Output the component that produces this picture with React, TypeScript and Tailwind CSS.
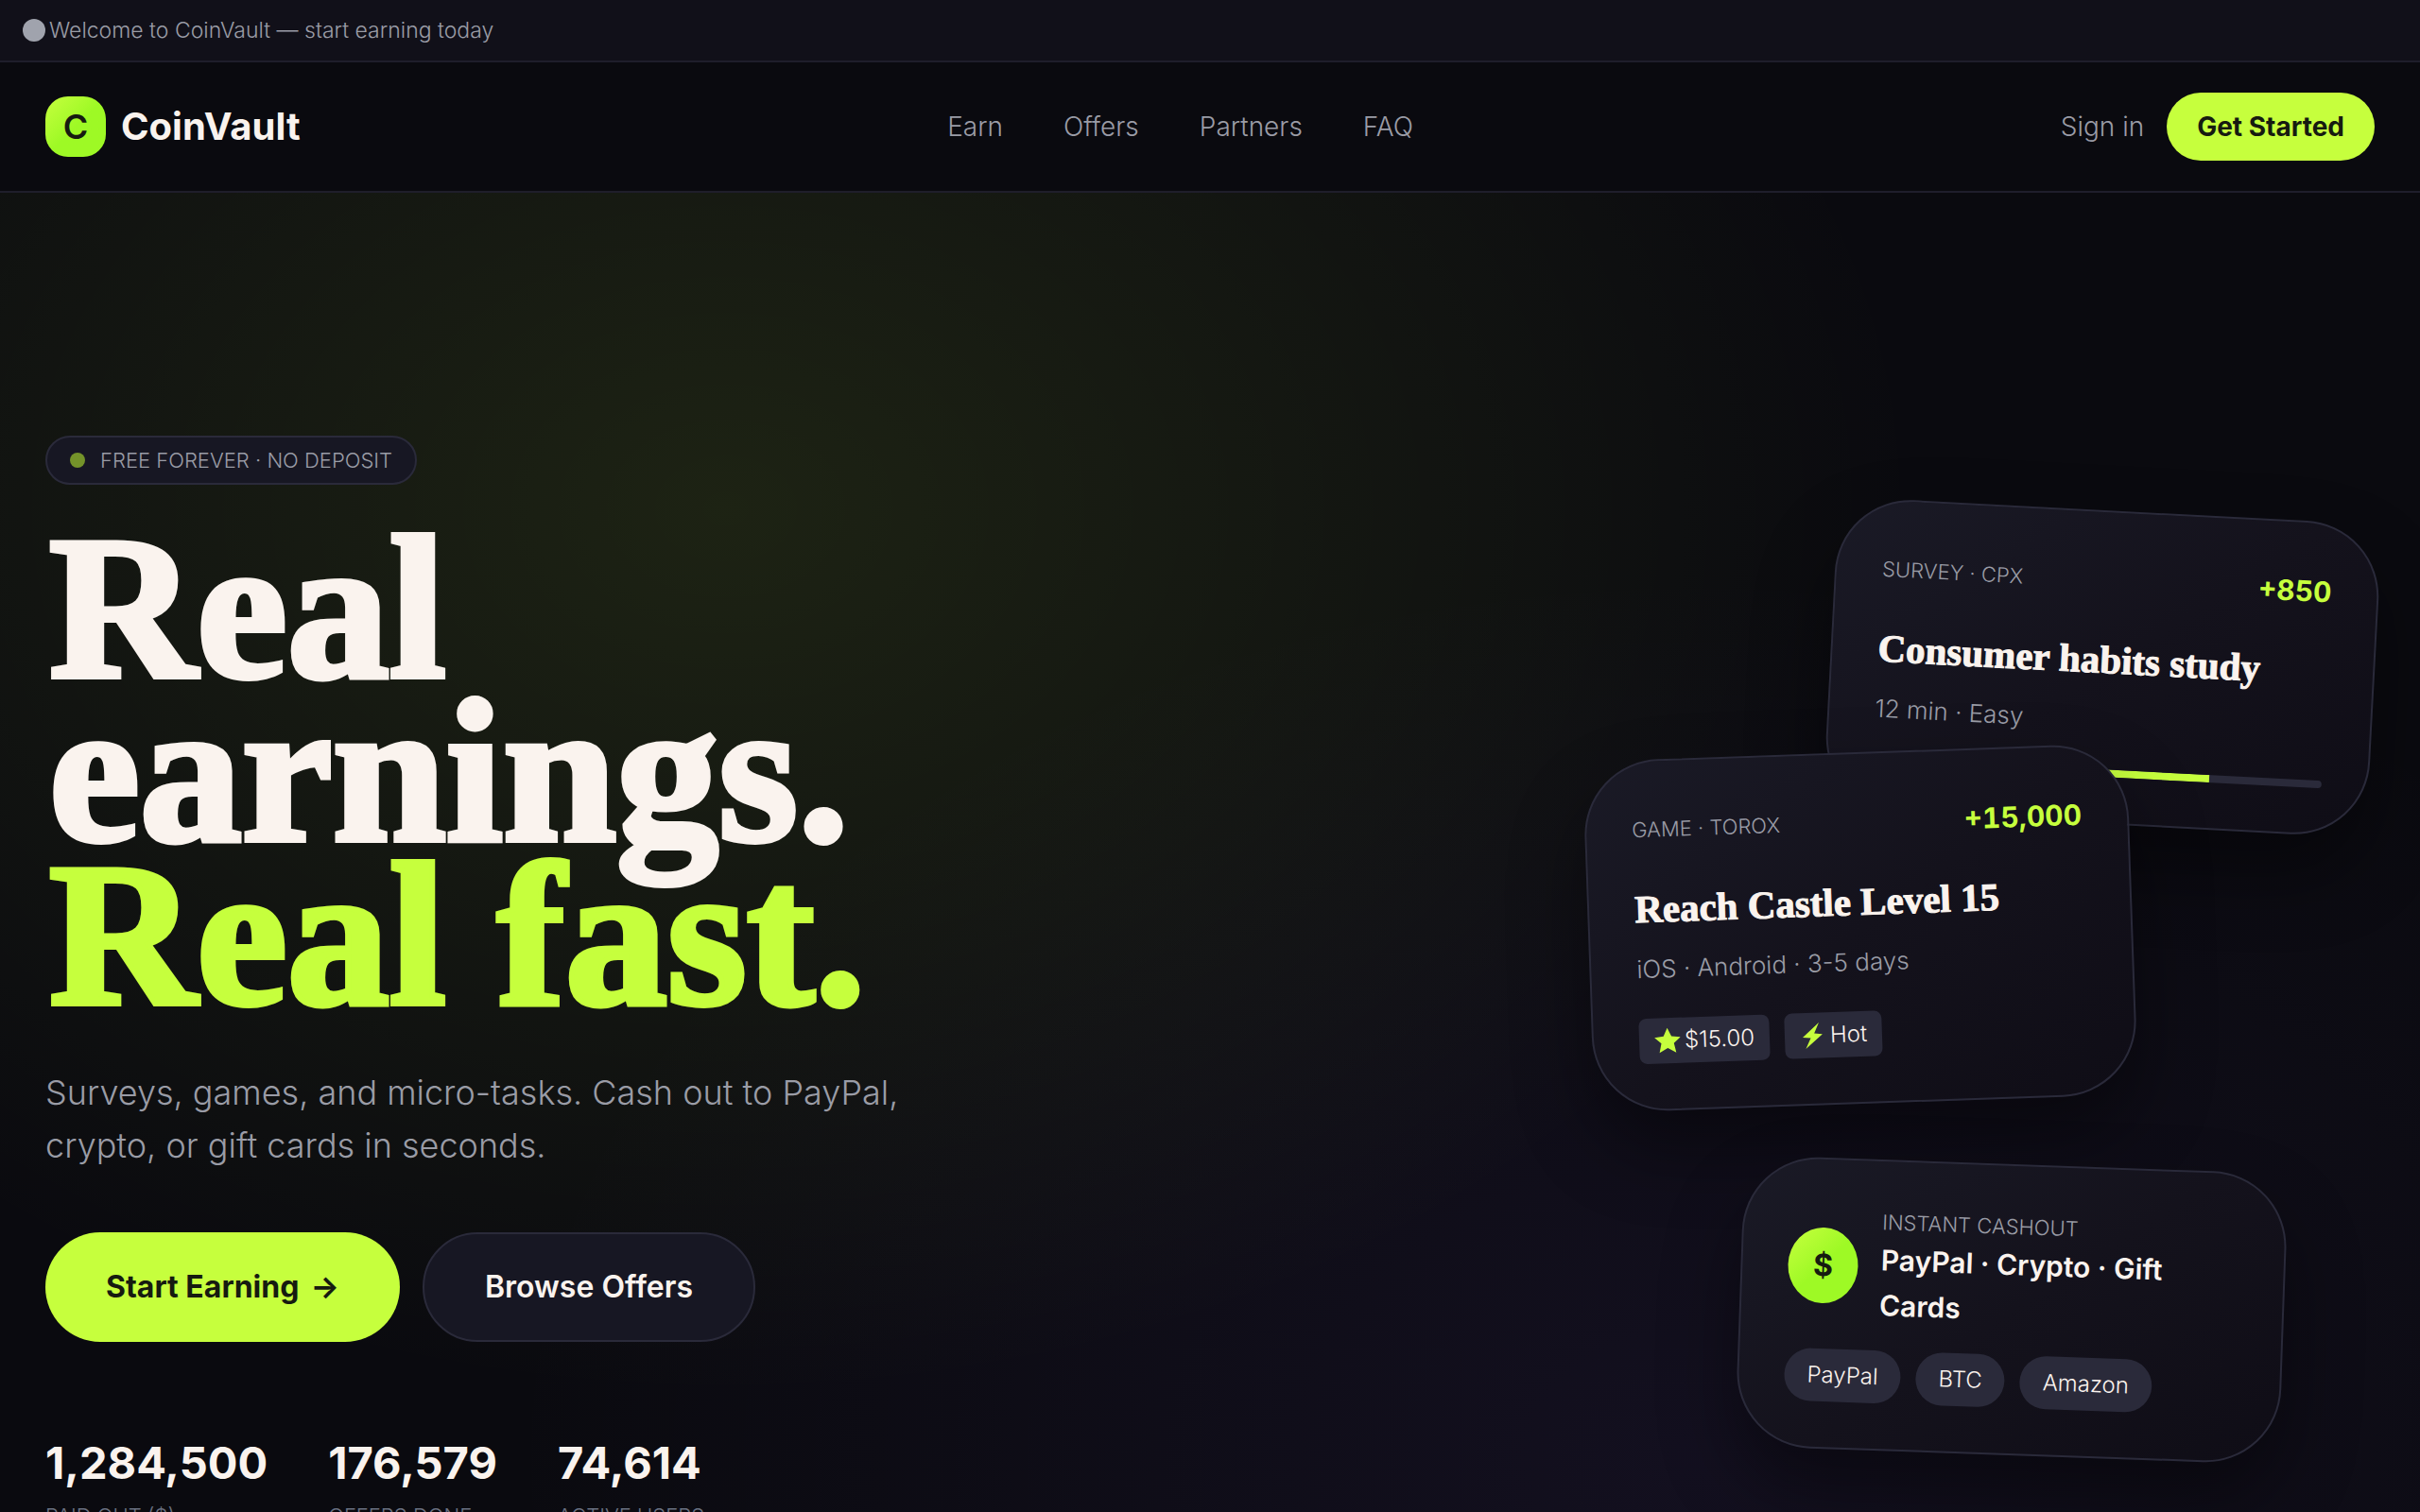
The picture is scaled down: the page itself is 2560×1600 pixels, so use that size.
import type { ReactNode } from "react";

const navLinks = ["Earn", "Offers", "Partners", "FAQ"];

const stats = [
  { value: "1,284,500", label: "PAID OUT ($)" },
  { value: "176,579", label: "OFFERS DONE" },
  { value: "74,614", label: "ACTIVE USERS" },
];

const payoutMethods = ["PayPal", "BTC", "Amazon"];

function StarIcon() {
  return (
    <svg viewBox="0 0 24 24" className="size-7 fill-[#c6ff3d]" aria-hidden="true">
      <path d="M12 .5l3.600 7.600 8.200.9-6.100 5.500 1.900 8.500L12 18.800l-7.600 4.200 1.900-8.500L.2 9l8.200-.9z" />
    </svg>
  );
}

function BoltIcon() {
  return (
    <svg viewBox="0 0 28 28" className="size-7 fill-[#c6ff3d]" aria-hidden="true">
      <path d="M20.500.5L3 15.800l8.500.9L6 28l18-15.300-8.700-.9z" />
    </svg>
  );
}

function Card({ className, children }: { className: string; children: ReactNode }) {
  return (
    <article
      className={
        "absolute w-[576px] rounded-[80px] border-2 border-[#2a2a3a] bg-linear-145 from-[#1a1a26] via-[#14121c] to-[#0f0d16] p-12 shadow-[0_40px_80px_rgba(0,0,0,0.4)] " +
        className
      }
    >
      {children}
    </article>
  );
}

function OfferHead({ source, reward, title, meta }: { source: string; reward: string; title: string; meta: string }) {
  return (
    <>
      <div className="flex h-12 items-center justify-between">
        <span className="text-[22px] leading-8 font-light text-[#9a9ca6]">{source}</span>
        <span className="text-[30px] font-bold text-[#c6ff3d] tabular-nums">{reward}</span>
      </div>
      <h2 className="mt-8 font-['Liberation_Serif',serif] text-[41px] leading-14 font-bold whitespace-nowrap [-webkit-text-stroke:1px_currentColor]">
        {title}
      </h2>
      <p className="mt-4 text-[26px] leading-10 font-light text-[#9a9ca6]">{meta}</p>
    </>
  );
}

function Tag({ children }: { children: ReactNode }) {
  return (
    <span className="flex items-center gap-1 rounded-lg bg-[#2a2a3a] px-4 py-2 text-2xl font-light">{children}</span>
  );
}

export default function App() {
  return (
    <div className="min-h-screen overflow-hidden bg-[#0a0a0f] font-['Inter',sans-serif] text-[#faf3ee]">
      <div className="flex items-center gap-1 border-b-2 border-[#1f1e2b] bg-[#111019] px-6 py-4 text-[23px] leading-8 font-light text-[#9a9ca6]">
        <span className="size-6 rounded-full bg-[#a0a3ad]" />
        <p>Welcome to CoinVault — start earning today</p>
      </div>

      <header className="flex items-center justify-between border-b-2 border-[#1f1e2b] px-12 py-8">
        <a href="#home" className="flex items-center gap-4">
          <span className="flex size-16 items-center justify-center rounded-[24px] bg-linear-135 from-[#c6ff3d] to-[#9ef925] to-50% text-4xl font-semibold text-[#161b10]">
            C
          </span>
          <span className="text-[40px] leading-14 font-bold">CoinVault</span>
        </a>
        <nav className="flex gap-16 text-[28px] leading-10 font-light text-[#9a9ca6]">
          {navLinks.map((label) => (
            <a key={label} href={"#" + label.toLowerCase()}>
              {label}
            </a>
          ))}
        </nav>
        <div className="flex items-center gap-6 text-[28px] leading-10">
          <a href="#signin" className="font-light text-[#9a9ca6]">
            Sign in
          </a>
          <button type="button" className="rounded-full bg-[#c6ff3d] px-8 py-4 font-bold text-[#161b10]">
            Get Started
          </button>
        </div>
      </header>

      <main className="flex min-h-[1672px] items-center justify-between bg-[radial-gradient(ellipse_at_30%_20%,rgba(198,255,61,0.1),transparent_50%),radial-gradient(ellipse_at_70%_80%,rgba(139,92,246,0.07),transparent_50%)] px-12">
        <section className="w-[960px]">
          <p className="flex w-fit items-center gap-4 rounded-full border-2 border-[#2a2a3a] bg-[#171723] px-6 py-2 text-[22px] leading-8 font-light text-[#9a9ca6]">
            <span className="size-4 rounded-full bg-[#74932a]" />
            FREE FOREVER · NO DEPOSIT
          </p>
          <h1 className="mt-11 pl-1 font-['Liberation_Serif',serif] text-[216px] leading-[173px] font-bold [-webkit-text-stroke:6px_currentColor]">
            <span className="block">Real</span>
            <span className="block">earnings.</span>
            <span className="block whitespace-nowrap text-[#c6ff3d]">Real fast.</span>
          </h1>
          <p className="mt-13 text-4xl leading-14 font-light text-[#9a9ca6]">
            Surveys, games, and micro-tasks. Cash out to PayPal,
            <br />
            crypto, or gift cards in seconds.
          </p>
          <div className="mt-16 flex gap-6 text-[32px] leading-12">
            <button type="button" className="flex items-center gap-3 rounded-full bg-[#c6ff3d] px-16 font-bold text-[#161b10]">
              Start Earning <span>→</span>
            </button>
            <button type="button" className="rounded-full border-2 border-[#2a2a3a] bg-[#171723] px-16 py-8 font-semibold">
              Browse Offers
            </button>
          </div>
          <dl className="mt-24 flex gap-16">
            {stats.map((stat) => (
              <div key={stat.label} className="flex flex-col-reverse gap-2">
                <dt className="text-[22px] leading-8 font-light text-gray-500">{stat.label}</dt>
                <dd className="text-[47px] leading-16 font-bold">{stat.value}</dd>
              </div>
            ))}
          </dl>
        </section>

        <section className="relative h-[1000px] w-[832px]">
          <Card className="top-0 right-0 rotate-3">
            <OfferHead source="SURVEY · CPX" reward="+850" title="Consumer habits study" meta="12 min · Easy" />
            <div className="mt-8 h-2 overflow-hidden rounded-full bg-[#2a2a3a]">
              <div className="h-full w-3/4 bg-[#c6ff3d]" />
            </div>
          </Card>
          <Card className="top-64 left-0 -rotate-2">
            <OfferHead source="GAME · TOROX" reward="+15,000" title="Reach Castle Level 15" meta="iOS · Android · 3-5 days" />
            <div className="mt-8 flex gap-4">
              <Tag>
                <StarIcon />
                $15.00
              </Tag>
              <Tag>
                <BoltIcon />
                Hot
              </Tag>
            </div>
          </Card>
          <Card className="right-24 bottom-0 rotate-2">
            <div className="flex items-center gap-6">
              <span className="flex h-20 w-[74px] shrink-0 items-center justify-center rounded-[50%] bg-linear-135 from-[#c6ff3d] to-[#9ef925] to-50% text-[32px] font-bold text-[#161b10]">
                $
              </span>
              <div>
                <p className="text-[22px] leading-8 font-light text-[#9a9ca6]">INSTANT CASHOUT</p>
                <p className="text-[30px] leading-12 font-semibold">PayPal · Crypto · Gift Cards</p>
              </div>
            </div>
            <div className="mt-6 flex gap-4">
              {payoutMethods.map((method) => (
                <span key={method} className="rounded-full bg-[#2a2a3a] px-6 py-3 text-2xl font-light">
                  {method}
                </span>
              ))}
            </div>
          </Card>
        </section>
      </main>
    </div>
  );
}
